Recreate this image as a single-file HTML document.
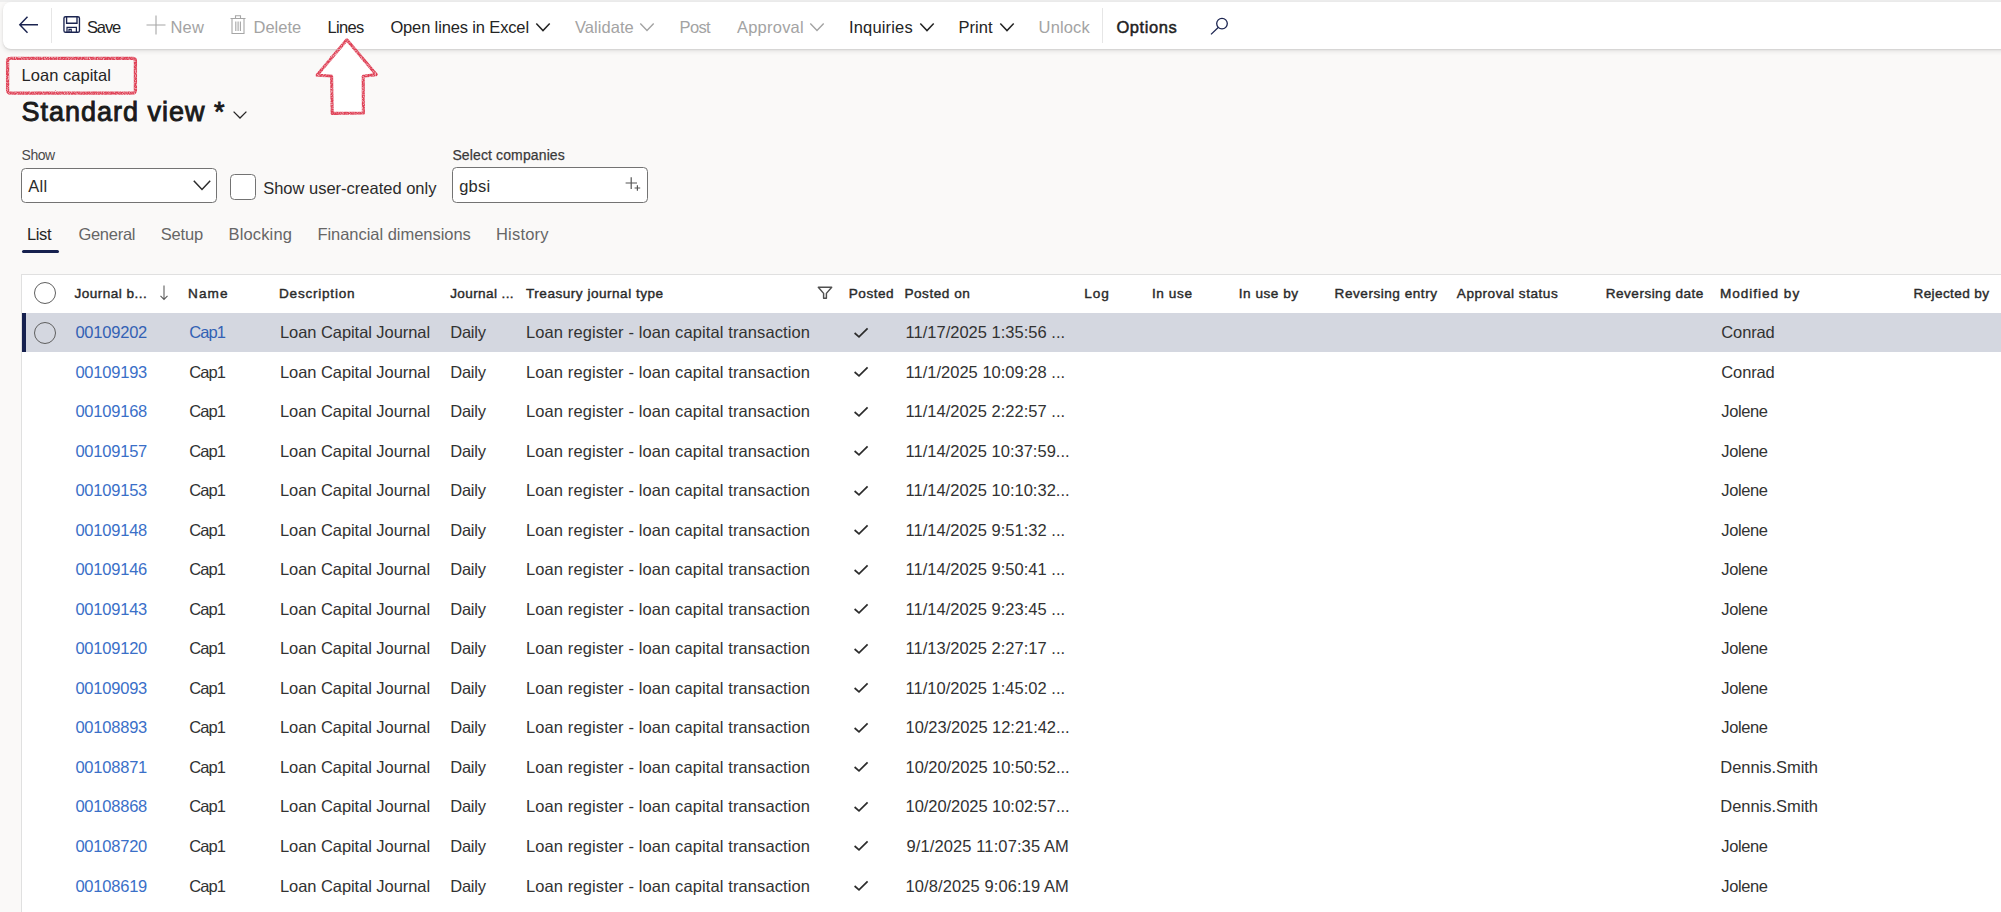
<!DOCTYPE html>
<html lang="en"><head><meta charset="utf-8"><title>Loan capital</title>
<style>
html,body{margin:0;padding:0;overflow:hidden;}
body{width:2001px;height:912px;overflow:hidden;background:#faf9f8;position:relative;font-family:"Liberation Sans",sans-serif;}
.t{position:absolute;white-space:nowrap;}
.a{position:absolute;display:block;}
.topstrip{position:absolute;left:0;top:0;width:2001px;height:2px;background:#eeeeee;}
.toolbar{position:absolute;left:3px;top:2px;width:2004px;height:47px;background:#fff;border-radius:8px 0 0 8px;box-shadow:0 1px 1.5px rgba(0,0,0,.09),0 2px 5px rgba(0,0,0,.10);}
.vsep{position:absolute;width:1.4px;background:#e6e6e6;}
.box{position:absolute;background:#fff;border:1px solid #737373;border-radius:4.5px;box-sizing:border-box;}
.grid{position:absolute;left:21px;top:274px;width:1990px;height:650px;background:#fff;border:1px solid #e0e0e0;box-sizing:border-box;}
.sel{position:absolute;left:22px;top:313px;width:1980px;height:39.2px;background:#d4d7e0;}
.selbar{position:absolute;left:22px;top:313px;width:4.2px;height:39.2px;background:#16214f;}
.circ{position:absolute;width:22px;height:22px;border:1px solid #5f5f5f;border-radius:50%;box-sizing:border-box;}

</style></head>
<body>
<div class="topstrip"></div>
<div class="toolbar"></div>
<div class="vsep" style="left:51px;top:8px;height:35px"></div>
<div class="vsep" style="left:1102px;top:8px;height:35px"></div>
<!-- back arrow -->
<svg class="a" style="left:17px;top:14px" width="24" height="22" viewBox="0 0 24 22"><path d="M21 10.8 H3 M10.5 2.8 L2.8 10.8 L10.5 18.8" fill="none" stroke="#1b2450" stroke-width="1.45"/></svg>
<!-- save icon -->
<svg class="a" style="left:62px;top:15px" width="20" height="20" viewBox="0 0 20 20"><rect x="1.95" y="1.75" width="15.5" height="15.5" rx="1.6" ry="1.6" fill="none" stroke="#1b2450" stroke-width="1.35"/><path d="M4.6 2 V8.2 H15 V2" fill="none" stroke="#1b2450" stroke-width="1.35"/><path d="M5 17.2 V12.4 H14.4 V17.2 M7 17.2 V14.4 H9.2 V17.2" fill="none" stroke="#1b2450" stroke-width="1.25"/></svg>
<!-- plus -->
<svg class="a" style="left:145px;top:14px" width="22" height="22" viewBox="0 0 22 22"><path d="M11 1.5 V20.5 M1.5 11 H20.5" fill="none" stroke="#a6a6a6" stroke-width="1.1"/></svg>
<!-- trash -->
<svg class="a" style="left:229px;top:14px" width="18" height="22" viewBox="0 0 18 22"><path d="M1.5 4.5 H16.5 M6.5 4.5 V1.8 H11.5 V4.5 M3 4.5 V19.5 H15 V4.5 M6.8 7.5 V17 M9.1 7.5 V17 M11.4 7.5 V17" fill="none" stroke="#a6a6a6" stroke-width="1.1"/></svg>
<!-- chevrons toolbar -->
<svg class="a" style="left:535px;top:22px" width="16" height="11" viewBox="0 0 16 11"><path d="M1.3 1.5 L8 8.6 L14.7 1.5" fill="none" stroke="#242424" stroke-width="1.5"/></svg>
<svg class="a" style="left:639px;top:22px" width="16" height="11" viewBox="0 0 16 11"><path d="M1.3 1.5 L8 8.6 L14.7 1.5" fill="none" stroke="#a3a3a3" stroke-width="1.4"/></svg>
<svg class="a" style="left:809px;top:22px" width="16" height="11" viewBox="0 0 16 11"><path d="M1.3 1.5 L8 8.6 L14.7 1.5" fill="none" stroke="#a3a3a3" stroke-width="1.4"/></svg>
<svg class="a" style="left:918.5px;top:22px" width="16" height="11" viewBox="0 0 16 11"><path d="M1.3 1.5 L8 8.6 L14.7 1.5" fill="none" stroke="#242424" stroke-width="1.5"/></svg>
<svg class="a" style="left:999px;top:22px" width="16" height="11" viewBox="0 0 16 11"><path d="M1.3 1.5 L8 8.6 L14.7 1.5" fill="none" stroke="#242424" stroke-width="1.5"/></svg>
<!-- search -->
<svg class="a" style="left:1208.9px;top:15.6px" width="21" height="20" viewBox="0 0 21 20"><circle cx="13" cy="7.6" r="5.3" fill="none" stroke="#1b2450" stroke-width="1.3"/><path d="M9.2 11.5 L2 18.4" fill="none" stroke="#1b2450" stroke-width="1.3"/></svg>

<!-- red annotation box -->
<svg class="a" style="left:0px;top:50px" width="400" height="72" viewBox="0 50 400 72">
<defs><filter id="cr" x="-5%" y="-5%" width="110%" height="110%"><feTurbulence type="fractalNoise" baseFrequency="0.85" numOctaves="2" seed="4" result="n"/><feDisplacementMap in="SourceGraphic" in2="n" scale="1.6" xChannelSelector="R" yChannelSelector="G" result="d"/><feColorMatrix in="n" type="matrix" values="0 0 0 0 1  0 0 0 0 1  0 0 0 0 1  0 0 0 -1.7 1.7" result="m"/><feComposite in="d" in2="m" operator="in"/></filter></defs>
<rect x="7.6" y="58.3" width="127.8" height="34.8" rx="2.5" ry="2.5" fill="none" stroke="#df3f55" stroke-width="3.3" filter="url(#cr)"/>
</svg>
<!-- red arrow -->
<svg class="a" style="left:305px;top:30px" width="84" height="92" viewBox="305 30 84 92">
<path d="M346.8 39.8 L376.2 74.6 L363.2 76.3 L363.4 113 L332.2 113.4 L331.6 76 L317 75.2 Z" fill="#ffffff" stroke="none"/>
<path d="M346.8 39.8 L376.2 74.6 L363.2 76.3 L363.4 113 L332.2 113.4 L331.6 76 L317 75.2 Z" fill="none" stroke="#df3f55" stroke-width="3.1" stroke-linejoin="round" filter="url(#cr)"/>
</svg>

<!-- title chevron -->
<svg class="a" style="left:231.9px;top:109.6px" width="16" height="10" viewBox="0 0 16 10"><path d="M1.6 1.6 L8 8 L14.4 1.6" fill="none" stroke="#262626" stroke-width="1.3"/></svg>

<!-- form controls -->
<div class="box" style="left:21px;top:168px;width:196px;height:35px"></div>
<svg class="a" style="left:192px;top:179px" width="20" height="13" viewBox="0 0 20 13"><path d="M1.8 1.8 L10 10.4 L18.2 1.8" fill="none" stroke="#2b2b2b" stroke-width="1.5"/></svg>
<div class="box" style="left:230px;top:174px;width:26px;height:26px"></div>
<div class="box" style="left:452px;top:167px;width:196px;height:36px"></div>
<svg class="a" style="left:624.3px;top:175.4px" width="18" height="18" viewBox="0 0 18 18"><path d="M7.2 2.2 V14 M1.6 8 H13 M13.4 10.2 V15.8 M10.6 13 H16.2" fill="none" stroke="#555" stroke-width="1.2"/></svg>

<!-- tab underline -->
<div style="position:absolute;left:22px;top:249.6px;width:36.5px;height:3px;border-radius:1.5px;background:#16214f"></div>

<!-- grid -->
<div class="grid"></div>
<div class="sel"></div>
<div class="selbar"></div>
<div class="circ" style="left:34px;top:282px"></div>
<div class="circ" style="left:34px;top:322px"></div>
<!-- sort arrow -->
<svg class="a" style="left:158.4px;top:284px" width="12" height="17" viewBox="0 0 12 17"><path d="M6 1.4 V15.2 M2.5 11.8 L6 15.4 L9.5 11.8" fill="none" stroke="#5a5a5a" stroke-width="1.05"/></svg>
<!-- filter -->
<svg class="a" style="left:816px;top:285px" width="18" height="16" viewBox="0 0 18 16"><path d="M2.3 2.2 H15.7 L10.4 8.4 V13.2 H7.6 V8.4 Z" fill="none" stroke="#4f4f4f" stroke-width="1.45" stroke-linejoin="round"/></svg>
<svg class="a" style="left:852px;top:324.60px" width="18" height="16" viewBox="0 0 18 16"><path d="M2.6 8.0 L7.0 11.8 L15.6 3.3" fill="none" stroke="#2b2b2b" stroke-width="1.7"/></svg>
<svg class="a" style="left:852px;top:364.13px" width="18" height="16" viewBox="0 0 18 16"><path d="M2.6 8.0 L7.0 11.8 L15.6 3.3" fill="none" stroke="#2b2b2b" stroke-width="1.7"/></svg>
<svg class="a" style="left:852px;top:403.66px" width="18" height="16" viewBox="0 0 18 16"><path d="M2.6 8.0 L7.0 11.8 L15.6 3.3" fill="none" stroke="#2b2b2b" stroke-width="1.7"/></svg>
<svg class="a" style="left:852px;top:443.19px" width="18" height="16" viewBox="0 0 18 16"><path d="M2.6 8.0 L7.0 11.8 L15.6 3.3" fill="none" stroke="#2b2b2b" stroke-width="1.7"/></svg>
<svg class="a" style="left:852px;top:482.72px" width="18" height="16" viewBox="0 0 18 16"><path d="M2.6 8.0 L7.0 11.8 L15.6 3.3" fill="none" stroke="#2b2b2b" stroke-width="1.7"/></svg>
<svg class="a" style="left:852px;top:522.25px" width="18" height="16" viewBox="0 0 18 16"><path d="M2.6 8.0 L7.0 11.8 L15.6 3.3" fill="none" stroke="#2b2b2b" stroke-width="1.7"/></svg>
<svg class="a" style="left:852px;top:561.78px" width="18" height="16" viewBox="0 0 18 16"><path d="M2.6 8.0 L7.0 11.8 L15.6 3.3" fill="none" stroke="#2b2b2b" stroke-width="1.7"/></svg>
<svg class="a" style="left:852px;top:601.31px" width="18" height="16" viewBox="0 0 18 16"><path d="M2.6 8.0 L7.0 11.8 L15.6 3.3" fill="none" stroke="#2b2b2b" stroke-width="1.7"/></svg>
<svg class="a" style="left:852px;top:640.84px" width="18" height="16" viewBox="0 0 18 16"><path d="M2.6 8.0 L7.0 11.8 L15.6 3.3" fill="none" stroke="#2b2b2b" stroke-width="1.7"/></svg>
<svg class="a" style="left:852px;top:680.37px" width="18" height="16" viewBox="0 0 18 16"><path d="M2.6 8.0 L7.0 11.8 L15.6 3.3" fill="none" stroke="#2b2b2b" stroke-width="1.7"/></svg>
<svg class="a" style="left:852px;top:719.90px" width="18" height="16" viewBox="0 0 18 16"><path d="M2.6 8.0 L7.0 11.8 L15.6 3.3" fill="none" stroke="#2b2b2b" stroke-width="1.7"/></svg>
<svg class="a" style="left:852px;top:759.43px" width="18" height="16" viewBox="0 0 18 16"><path d="M2.6 8.0 L7.0 11.8 L15.6 3.3" fill="none" stroke="#2b2b2b" stroke-width="1.7"/></svg>
<svg class="a" style="left:852px;top:798.96px" width="18" height="16" viewBox="0 0 18 16"><path d="M2.6 8.0 L7.0 11.8 L15.6 3.3" fill="none" stroke="#2b2b2b" stroke-width="1.7"/></svg>
<svg class="a" style="left:852px;top:838.49px" width="18" height="16" viewBox="0 0 18 16"><path d="M2.6 8.0 L7.0 11.8 L15.6 3.3" fill="none" stroke="#2b2b2b" stroke-width="1.7"/></svg>
<svg class="a" style="left:852px;top:878.02px" width="18" height="16" viewBox="0 0 18 16"><path d="M2.6 8.0 L7.0 11.8 L15.6 3.3" fill="none" stroke="#2b2b2b" stroke-width="1.7"/></svg>

<nav class="actionpane">
<div class="t" style="left:87.00px;top:18px;line-height:18px;height:18px;font-size:16.5px;letter-spacing:-1.144px;color:#242424;">Save</div>
<div class="t" style="left:170.50px;top:18px;line-height:18px;height:18px;font-size:16.5px;letter-spacing:0.204px;color:#a3a3a3;">New</div>
<div class="t" style="left:253.50px;top:18px;line-height:18px;height:18px;font-size:16.5px;letter-spacing:-0.004px;color:#a3a3a3;">Delete</div>
<div class="t" style="left:327.50px;top:18px;line-height:18px;height:18px;font-size:16.5px;letter-spacing:-0.674px;color:#242424;">Lines</div>
<div class="t" style="left:390.40px;top:18px;line-height:18px;height:18px;font-size:16.5px;letter-spacing:-0.143px;color:#242424;">Open lines in Excel</div>
<div class="t" style="left:575.00px;top:18px;line-height:18px;height:18px;font-size:16.5px;letter-spacing:0.053px;color:#a3a3a3;">Validate</div>
<div class="t" style="left:679.60px;top:18px;line-height:18px;height:18px;font-size:16.5px;letter-spacing:-0.677px;color:#a3a3a3;">Post</div>
<div class="t" style="left:737.00px;top:18px;line-height:18px;height:18px;font-size:16.5px;letter-spacing:0.221px;color:#a3a3a3;">Approval</div>
<div class="t" style="left:849.00px;top:18px;line-height:18px;height:18px;font-size:16.5px;letter-spacing:0.160px;color:#242424;">Inquiries</div>
<div class="t" style="left:958.60px;top:18px;line-height:18px;height:18px;font-size:16.5px;letter-spacing:0.014px;color:#242424;">Print</div>
<div class="t" style="left:1038.60px;top:18px;line-height:18px;height:18px;font-size:16.5px;letter-spacing:0.123px;color:#a3a3a3;">Unlock</div>
<div class="t" style="left:1116.40px;top:18px;line-height:18px;height:18px;font-size:16.5px;letter-spacing:0.564px;color:#1f1f1f;-webkit-text-stroke:0.5px #1f1f1f;">Options</div>
</nav>
<header class="pagehead">
<div class="t" style="left:21.50px;top:66px;line-height:18px;height:18px;font-size:16.5px;letter-spacing:0.035px;color:#252525;">Loan capital</div>
<div class="t" style="left:21.50px;top:97px;line-height:30px;height:30px;font-size:27px;letter-spacing:0.993px;color:#1a1a1a;-webkit-text-stroke:0.9px #1a1a1a;">Standard view *</div>
</header>
<section class="filters">
<div class="t" style="left:21.60px;top:147px;line-height:16px;height:16px;font-size:14px;letter-spacing:-0.503px;color:#4a4a4a;">Show</div>
<div class="t" style="left:28.20px;top:177px;line-height:18px;height:18px;font-size:16.5px;letter-spacing:0.314px;color:#2b2b2b;">All</div>
<div class="t" style="left:263.20px;top:179px;line-height:18px;height:18px;font-size:16.5px;letter-spacing:-0.004px;color:#2b2b2b;">Show user-created only</div>
<div class="t" style="left:452.40px;top:147px;line-height:16px;height:16px;font-size:14px;letter-spacing:0.126px;color:#3a3a3a;-webkit-text-stroke:0.25px #3a3a3a;">Select companies</div>
<div class="t" style="left:459.20px;top:177px;line-height:18px;height:18px;font-size:16.5px;letter-spacing:0.199px;color:#2b2b2b;">gbsi</div>
</section>
<nav class="tabs">
<div class="t" style="left:27.00px;top:225px;line-height:18px;height:18px;font-size:16.5px;letter-spacing:-0.364px;color:#252525;">List</div>
<div class="t" style="left:78.40px;top:225px;line-height:18px;height:18px;font-size:16.5px;letter-spacing:-0.272px;color:#666666;">General</div>
<div class="t" style="left:160.70px;top:225px;line-height:18px;height:18px;font-size:16.5px;letter-spacing:-0.136px;color:#666666;">Setup</div>
<div class="t" style="left:228.60px;top:225px;line-height:18px;height:18px;font-size:16.5px;letter-spacing:0.130px;color:#666666;">Blocking</div>
<div class="t" style="left:317.40px;top:225px;line-height:18px;height:18px;font-size:16.5px;letter-spacing:-0.033px;color:#666666;">Financial dimensions</div>
<div class="t" style="left:496.00px;top:225px;line-height:18px;height:18px;font-size:16.5px;letter-spacing:0.186px;color:#666666;">History</div>
</nav>
<div class="gridhead">
<div class="t" style="left:74.40px;top:286px;line-height:15px;height:15px;font-size:13.6px;letter-spacing:0.457px;color:#2a2a2a;-webkit-text-stroke:0.4px #2a2a2a;">Journal b...</div>
<div class="t" style="left:188.00px;top:286px;line-height:15px;height:15px;font-size:13.6px;letter-spacing:1.100px;color:#2a2a2a;-webkit-text-stroke:0.4px #2a2a2a;">Name</div>
<div class="t" style="left:279.00px;top:286px;line-height:15px;height:15px;font-size:13.6px;letter-spacing:0.756px;color:#2a2a2a;-webkit-text-stroke:0.4px #2a2a2a;">Description</div>
<div class="t" style="left:450.20px;top:286px;line-height:15px;height:15px;font-size:13.6px;letter-spacing:0.369px;color:#2a2a2a;-webkit-text-stroke:0.4px #2a2a2a;">Journal ...</div>
<div class="t" style="left:526.00px;top:286px;line-height:15px;height:15px;font-size:13.6px;letter-spacing:0.499px;color:#2a2a2a;-webkit-text-stroke:0.4px #2a2a2a;">Treasury journal type</div>
<div class="t" style="left:848.80px;top:286px;line-height:15px;height:15px;font-size:13.6px;letter-spacing:0.488px;color:#2a2a2a;-webkit-text-stroke:0.4px #2a2a2a;">Posted</div>
<div class="t" style="left:904.40px;top:286px;line-height:15px;height:15px;font-size:13.6px;letter-spacing:0.530px;color:#2a2a2a;-webkit-text-stroke:0.4px #2a2a2a;">Posted on</div>
<div class="t" style="left:1084.20px;top:286px;line-height:15px;height:15px;font-size:13.6px;letter-spacing:0.940px;color:#2a2a2a;-webkit-text-stroke:0.4px #2a2a2a;">Log</div>
<div class="t" style="left:1152.00px;top:286px;line-height:15px;height:15px;font-size:13.6px;letter-spacing:0.586px;color:#2a2a2a;-webkit-text-stroke:0.4px #2a2a2a;">In use</div>
<div class="t" style="left:1238.80px;top:286px;line-height:15px;height:15px;font-size:13.6px;letter-spacing:0.504px;color:#2a2a2a;-webkit-text-stroke:0.4px #2a2a2a;">In use by</div>
<div class="t" style="left:1334.60px;top:286px;line-height:15px;height:15px;font-size:13.6px;letter-spacing:0.514px;color:#2a2a2a;-webkit-text-stroke:0.4px #2a2a2a;">Reversing entry</div>
<div class="t" style="left:1456.80px;top:286px;line-height:15px;height:15px;font-size:13.6px;letter-spacing:0.514px;color:#2a2a2a;-webkit-text-stroke:0.4px #2a2a2a;">Approval status</div>
<div class="t" style="left:1605.80px;top:286px;line-height:15px;height:15px;font-size:13.6px;letter-spacing:0.464px;color:#2a2a2a;-webkit-text-stroke:0.4px #2a2a2a;">Reversing date</div>
<div class="t" style="left:1720.00px;top:286px;line-height:15px;height:15px;font-size:13.6px;letter-spacing:0.968px;color:#2a2a2a;-webkit-text-stroke:0.4px #2a2a2a;">Modified by</div>
<div class="t" style="left:1913.50px;top:286px;line-height:15px;height:15px;font-size:13.6px;letter-spacing:0.371px;color:#2a2a2a;-webkit-text-stroke:0.4px #2a2a2a;">Rejected by</div>
</div>
<div class="row">
<div class="t" style="left:75.40px;top:323px;line-height:18px;height:18px;font-size:16.5px;letter-spacing:-0.219px;color:#3361b4;">00109202</div>
<div class="t" style="left:189.30px;top:323px;line-height:18px;height:18px;font-size:16.5px;letter-spacing:-0.956px;color:#3361b4;">Cap1</div>
<div class="t" style="left:280.00px;top:323px;line-height:18px;height:18px;font-size:16.5px;letter-spacing:-0.068px;color:#323232;">Loan Capital Journal</div>
<div class="t" style="left:450.20px;top:323px;line-height:18px;height:18px;font-size:16.5px;letter-spacing:-0.206px;color:#323232;">Daily</div>
<div class="t" style="left:526.00px;top:323px;line-height:18px;height:18px;font-size:16.5px;letter-spacing:0.109px;color:#323232;">Loan register - loan capital transaction</div>
<div class="t" style="left:905.50px;top:323px;line-height:18px;height:18px;font-size:16.5px;letter-spacing:0.012px;color:#323232;">11/17/2025 1:35:56 ...</div>
<div class="t" style="left:1721.30px;top:323px;line-height:18px;height:18px;font-size:16.5px;letter-spacing:-0.128px;color:#323232;">Conrad</div>
</div>
<div class="row">
<div class="t" style="left:75.40px;top:363px;line-height:18px;height:18px;font-size:16.5px;letter-spacing:-0.219px;color:#3a6fc8;">00109193</div>
<div class="t" style="left:189.30px;top:363px;line-height:18px;height:18px;font-size:16.5px;letter-spacing:-0.956px;color:#323232;">Cap1</div>
<div class="t" style="left:280.00px;top:363px;line-height:18px;height:18px;font-size:16.5px;letter-spacing:-0.068px;color:#323232;">Loan Capital Journal</div>
<div class="t" style="left:450.20px;top:363px;line-height:18px;height:18px;font-size:16.5px;letter-spacing:-0.206px;color:#323232;">Daily</div>
<div class="t" style="left:526.00px;top:363px;line-height:18px;height:18px;font-size:16.5px;letter-spacing:0.109px;color:#323232;">Loan register - loan capital transaction</div>
<div class="t" style="left:905.50px;top:363px;line-height:18px;height:18px;font-size:16.5px;letter-spacing:0.012px;color:#323232;">11/1/2025 10:09:28 ...</div>
<div class="t" style="left:1721.30px;top:363px;line-height:18px;height:18px;font-size:16.5px;letter-spacing:-0.128px;color:#323232;">Conrad</div>
</div>
<div class="row">
<div class="t" style="left:75.40px;top:402px;line-height:18px;height:18px;font-size:16.5px;letter-spacing:-0.219px;color:#3a6fc8;">00109168</div>
<div class="t" style="left:189.30px;top:402px;line-height:18px;height:18px;font-size:16.5px;letter-spacing:-0.956px;color:#323232;">Cap1</div>
<div class="t" style="left:280.00px;top:402px;line-height:18px;height:18px;font-size:16.5px;letter-spacing:-0.068px;color:#323232;">Loan Capital Journal</div>
<div class="t" style="left:450.20px;top:402px;line-height:18px;height:18px;font-size:16.5px;letter-spacing:-0.206px;color:#323232;">Daily</div>
<div class="t" style="left:526.00px;top:402px;line-height:18px;height:18px;font-size:16.5px;letter-spacing:0.109px;color:#323232;">Loan register - loan capital transaction</div>
<div class="t" style="left:905.50px;top:402px;line-height:18px;height:18px;font-size:16.5px;letter-spacing:0.012px;color:#323232;">11/14/2025 2:22:57 ...</div>
<div class="t" style="left:1721.30px;top:402px;line-height:18px;height:18px;font-size:16.5px;letter-spacing:-0.389px;color:#323232;">Jolene</div>
</div>
<div class="row">
<div class="t" style="left:75.40px;top:442px;line-height:18px;height:18px;font-size:16.5px;letter-spacing:-0.219px;color:#3a6fc8;">00109157</div>
<div class="t" style="left:189.30px;top:442px;line-height:18px;height:18px;font-size:16.5px;letter-spacing:-0.956px;color:#323232;">Cap1</div>
<div class="t" style="left:280.00px;top:442px;line-height:18px;height:18px;font-size:16.5px;letter-spacing:-0.068px;color:#323232;">Loan Capital Journal</div>
<div class="t" style="left:450.20px;top:442px;line-height:18px;height:18px;font-size:16.5px;letter-spacing:-0.206px;color:#323232;">Daily</div>
<div class="t" style="left:526.00px;top:442px;line-height:18px;height:18px;font-size:16.5px;letter-spacing:0.109px;color:#323232;">Loan register - loan capital transaction</div>
<div class="t" style="left:905.50px;top:442px;line-height:18px;height:18px;font-size:16.5px;letter-spacing:0.008px;color:#323232;">11/14/2025 10:37:59...</div>
<div class="t" style="left:1721.30px;top:442px;line-height:18px;height:18px;font-size:16.5px;letter-spacing:-0.389px;color:#323232;">Jolene</div>
</div>
<div class="row">
<div class="t" style="left:75.40px;top:481px;line-height:18px;height:18px;font-size:16.5px;letter-spacing:-0.219px;color:#3a6fc8;">00109153</div>
<div class="t" style="left:189.30px;top:481px;line-height:18px;height:18px;font-size:16.5px;letter-spacing:-0.956px;color:#323232;">Cap1</div>
<div class="t" style="left:280.00px;top:481px;line-height:18px;height:18px;font-size:16.5px;letter-spacing:-0.068px;color:#323232;">Loan Capital Journal</div>
<div class="t" style="left:450.20px;top:481px;line-height:18px;height:18px;font-size:16.5px;letter-spacing:-0.206px;color:#323232;">Daily</div>
<div class="t" style="left:526.00px;top:481px;line-height:18px;height:18px;font-size:16.5px;letter-spacing:0.109px;color:#323232;">Loan register - loan capital transaction</div>
<div class="t" style="left:905.50px;top:481px;line-height:18px;height:18px;font-size:16.5px;letter-spacing:0.008px;color:#323232;">11/14/2025 10:10:32...</div>
<div class="t" style="left:1721.30px;top:481px;line-height:18px;height:18px;font-size:16.5px;letter-spacing:-0.389px;color:#323232;">Jolene</div>
</div>
<div class="row">
<div class="t" style="left:75.40px;top:521px;line-height:18px;height:18px;font-size:16.5px;letter-spacing:-0.219px;color:#3a6fc8;">00109148</div>
<div class="t" style="left:189.30px;top:521px;line-height:18px;height:18px;font-size:16.5px;letter-spacing:-0.956px;color:#323232;">Cap1</div>
<div class="t" style="left:280.00px;top:521px;line-height:18px;height:18px;font-size:16.5px;letter-spacing:-0.068px;color:#323232;">Loan Capital Journal</div>
<div class="t" style="left:450.20px;top:521px;line-height:18px;height:18px;font-size:16.5px;letter-spacing:-0.206px;color:#323232;">Daily</div>
<div class="t" style="left:526.00px;top:521px;line-height:18px;height:18px;font-size:16.5px;letter-spacing:0.109px;color:#323232;">Loan register - loan capital transaction</div>
<div class="t" style="left:905.50px;top:521px;line-height:18px;height:18px;font-size:16.5px;letter-spacing:0.012px;color:#323232;">11/14/2025 9:51:32 ...</div>
<div class="t" style="left:1721.30px;top:521px;line-height:18px;height:18px;font-size:16.5px;letter-spacing:-0.389px;color:#323232;">Jolene</div>
</div>
<div class="row">
<div class="t" style="left:75.40px;top:560px;line-height:18px;height:18px;font-size:16.5px;letter-spacing:-0.219px;color:#3a6fc8;">00109146</div>
<div class="t" style="left:189.30px;top:560px;line-height:18px;height:18px;font-size:16.5px;letter-spacing:-0.956px;color:#323232;">Cap1</div>
<div class="t" style="left:280.00px;top:560px;line-height:18px;height:18px;font-size:16.5px;letter-spacing:-0.068px;color:#323232;">Loan Capital Journal</div>
<div class="t" style="left:450.20px;top:560px;line-height:18px;height:18px;font-size:16.5px;letter-spacing:-0.206px;color:#323232;">Daily</div>
<div class="t" style="left:526.00px;top:560px;line-height:18px;height:18px;font-size:16.5px;letter-spacing:0.109px;color:#323232;">Loan register - loan capital transaction</div>
<div class="t" style="left:905.50px;top:560px;line-height:18px;height:18px;font-size:16.5px;letter-spacing:0.012px;color:#323232;">11/14/2025 9:50:41 ...</div>
<div class="t" style="left:1721.30px;top:560px;line-height:18px;height:18px;font-size:16.5px;letter-spacing:-0.389px;color:#323232;">Jolene</div>
</div>
<div class="row">
<div class="t" style="left:75.40px;top:600px;line-height:18px;height:18px;font-size:16.5px;letter-spacing:-0.219px;color:#3a6fc8;">00109143</div>
<div class="t" style="left:189.30px;top:600px;line-height:18px;height:18px;font-size:16.5px;letter-spacing:-0.956px;color:#323232;">Cap1</div>
<div class="t" style="left:280.00px;top:600px;line-height:18px;height:18px;font-size:16.5px;letter-spacing:-0.068px;color:#323232;">Loan Capital Journal</div>
<div class="t" style="left:450.20px;top:600px;line-height:18px;height:18px;font-size:16.5px;letter-spacing:-0.206px;color:#323232;">Daily</div>
<div class="t" style="left:526.00px;top:600px;line-height:18px;height:18px;font-size:16.5px;letter-spacing:0.109px;color:#323232;">Loan register - loan capital transaction</div>
<div class="t" style="left:905.50px;top:600px;line-height:18px;height:18px;font-size:16.5px;letter-spacing:0.012px;color:#323232;">11/14/2025 9:23:45 ...</div>
<div class="t" style="left:1721.30px;top:600px;line-height:18px;height:18px;font-size:16.5px;letter-spacing:-0.389px;color:#323232;">Jolene</div>
</div>
<div class="row">
<div class="t" style="left:75.40px;top:639px;line-height:18px;height:18px;font-size:16.5px;letter-spacing:-0.219px;color:#3a6fc8;">00109120</div>
<div class="t" style="left:189.30px;top:639px;line-height:18px;height:18px;font-size:16.5px;letter-spacing:-0.956px;color:#323232;">Cap1</div>
<div class="t" style="left:280.00px;top:639px;line-height:18px;height:18px;font-size:16.5px;letter-spacing:-0.068px;color:#323232;">Loan Capital Journal</div>
<div class="t" style="left:450.20px;top:639px;line-height:18px;height:18px;font-size:16.5px;letter-spacing:-0.206px;color:#323232;">Daily</div>
<div class="t" style="left:526.00px;top:639px;line-height:18px;height:18px;font-size:16.5px;letter-spacing:0.109px;color:#323232;">Loan register - loan capital transaction</div>
<div class="t" style="left:905.50px;top:639px;line-height:18px;height:18px;font-size:16.5px;letter-spacing:0.012px;color:#323232;">11/13/2025 2:27:17 ...</div>
<div class="t" style="left:1721.30px;top:639px;line-height:18px;height:18px;font-size:16.5px;letter-spacing:-0.389px;color:#323232;">Jolene</div>
</div>
<div class="row">
<div class="t" style="left:75.40px;top:679px;line-height:18px;height:18px;font-size:16.5px;letter-spacing:-0.219px;color:#3a6fc8;">00109093</div>
<div class="t" style="left:189.30px;top:679px;line-height:18px;height:18px;font-size:16.5px;letter-spacing:-0.956px;color:#323232;">Cap1</div>
<div class="t" style="left:280.00px;top:679px;line-height:18px;height:18px;font-size:16.5px;letter-spacing:-0.068px;color:#323232;">Loan Capital Journal</div>
<div class="t" style="left:450.20px;top:679px;line-height:18px;height:18px;font-size:16.5px;letter-spacing:-0.206px;color:#323232;">Daily</div>
<div class="t" style="left:526.00px;top:679px;line-height:18px;height:18px;font-size:16.5px;letter-spacing:0.109px;color:#323232;">Loan register - loan capital transaction</div>
<div class="t" style="left:905.50px;top:679px;line-height:18px;height:18px;font-size:16.5px;letter-spacing:0.012px;color:#323232;">11/10/2025 1:45:02 ...</div>
<div class="t" style="left:1721.30px;top:679px;line-height:18px;height:18px;font-size:16.5px;letter-spacing:-0.389px;color:#323232;">Jolene</div>
</div>
<div class="row">
<div class="t" style="left:75.40px;top:718px;line-height:18px;height:18px;font-size:16.5px;letter-spacing:-0.219px;color:#3a6fc8;">00108893</div>
<div class="t" style="left:189.30px;top:718px;line-height:18px;height:18px;font-size:16.5px;letter-spacing:-0.956px;color:#323232;">Cap1</div>
<div class="t" style="left:280.00px;top:718px;line-height:18px;height:18px;font-size:16.5px;letter-spacing:-0.068px;color:#323232;">Loan Capital Journal</div>
<div class="t" style="left:450.20px;top:718px;line-height:18px;height:18px;font-size:16.5px;letter-spacing:-0.206px;color:#323232;">Daily</div>
<div class="t" style="left:526.00px;top:718px;line-height:18px;height:18px;font-size:16.5px;letter-spacing:0.109px;color:#323232;">Loan register - loan capital transaction</div>
<div class="t" style="left:905.50px;top:718px;line-height:18px;height:18px;font-size:16.5px;letter-spacing:-0.051px;color:#323232;">10/23/2025 12:21:42...</div>
<div class="t" style="left:1721.30px;top:718px;line-height:18px;height:18px;font-size:16.5px;letter-spacing:-0.389px;color:#323232;">Jolene</div>
</div>
<div class="row">
<div class="t" style="left:75.40px;top:758px;line-height:18px;height:18px;font-size:16.5px;letter-spacing:-0.219px;color:#3a6fc8;">00108871</div>
<div class="t" style="left:189.30px;top:758px;line-height:18px;height:18px;font-size:16.5px;letter-spacing:-0.956px;color:#323232;">Cap1</div>
<div class="t" style="left:280.00px;top:758px;line-height:18px;height:18px;font-size:16.5px;letter-spacing:-0.068px;color:#323232;">Loan Capital Journal</div>
<div class="t" style="left:450.20px;top:758px;line-height:18px;height:18px;font-size:16.5px;letter-spacing:-0.206px;color:#323232;">Daily</div>
<div class="t" style="left:526.00px;top:758px;line-height:18px;height:18px;font-size:16.5px;letter-spacing:0.109px;color:#323232;">Loan register - loan capital transaction</div>
<div class="t" style="left:905.50px;top:758px;line-height:18px;height:18px;font-size:16.5px;letter-spacing:-0.051px;color:#323232;">10/20/2025 10:50:52...</div>
<div class="t" style="left:1720.30px;top:758px;line-height:18px;height:18px;font-size:16.5px;letter-spacing:-0.040px;color:#323232;">Dennis.Smith</div>
</div>
<div class="row">
<div class="t" style="left:75.40px;top:797px;line-height:18px;height:18px;font-size:16.5px;letter-spacing:-0.219px;color:#3a6fc8;">00108868</div>
<div class="t" style="left:189.30px;top:797px;line-height:18px;height:18px;font-size:16.5px;letter-spacing:-0.956px;color:#323232;">Cap1</div>
<div class="t" style="left:280.00px;top:797px;line-height:18px;height:18px;font-size:16.5px;letter-spacing:-0.068px;color:#323232;">Loan Capital Journal</div>
<div class="t" style="left:450.20px;top:797px;line-height:18px;height:18px;font-size:16.5px;letter-spacing:-0.206px;color:#323232;">Daily</div>
<div class="t" style="left:526.00px;top:797px;line-height:18px;height:18px;font-size:16.5px;letter-spacing:0.109px;color:#323232;">Loan register - loan capital transaction</div>
<div class="t" style="left:905.50px;top:797px;line-height:18px;height:18px;font-size:16.5px;letter-spacing:-0.051px;color:#323232;">10/20/2025 10:02:57...</div>
<div class="t" style="left:1720.30px;top:797px;line-height:18px;height:18px;font-size:16.5px;letter-spacing:-0.040px;color:#323232;">Dennis.Smith</div>
</div>
<div class="row">
<div class="t" style="left:75.40px;top:837px;line-height:18px;height:18px;font-size:16.5px;letter-spacing:-0.219px;color:#3a6fc8;">00108720</div>
<div class="t" style="left:189.30px;top:837px;line-height:18px;height:18px;font-size:16.5px;letter-spacing:-0.956px;color:#323232;">Cap1</div>
<div class="t" style="left:280.00px;top:837px;line-height:18px;height:18px;font-size:16.5px;letter-spacing:-0.068px;color:#323232;">Loan Capital Journal</div>
<div class="t" style="left:450.20px;top:837px;line-height:18px;height:18px;font-size:16.5px;letter-spacing:-0.206px;color:#323232;">Daily</div>
<div class="t" style="left:526.00px;top:837px;line-height:18px;height:18px;font-size:16.5px;letter-spacing:0.109px;color:#323232;">Loan register - loan capital transaction</div>
<div class="t" style="left:906.50px;top:837px;line-height:18px;height:18px;font-size:16.5px;letter-spacing:0.110px;color:#323232;">9/1/2025 11:07:35 AM</div>
<div class="t" style="left:1721.30px;top:837px;line-height:18px;height:18px;font-size:16.5px;letter-spacing:-0.389px;color:#323232;">Jolene</div>
</div>
<div class="row">
<div class="t" style="left:75.40px;top:877px;line-height:18px;height:18px;font-size:16.5px;letter-spacing:-0.219px;color:#3a6fc8;">00108619</div>
<div class="t" style="left:189.30px;top:877px;line-height:18px;height:18px;font-size:16.5px;letter-spacing:-0.956px;color:#323232;">Cap1</div>
<div class="t" style="left:280.00px;top:877px;line-height:18px;height:18px;font-size:16.5px;letter-spacing:-0.068px;color:#323232;">Loan Capital Journal</div>
<div class="t" style="left:450.20px;top:877px;line-height:18px;height:18px;font-size:16.5px;letter-spacing:-0.206px;color:#323232;">Daily</div>
<div class="t" style="left:526.00px;top:877px;line-height:18px;height:18px;font-size:16.5px;letter-spacing:0.109px;color:#323232;">Loan register - loan capital transaction</div>
<div class="t" style="left:905.50px;top:877px;line-height:18px;height:18px;font-size:16.5px;letter-spacing:0.098px;color:#323232;">10/8/2025 9:06:19 AM</div>
<div class="t" style="left:1721.30px;top:877px;line-height:18px;height:18px;font-size:16.5px;letter-spacing:-0.389px;color:#323232;">Jolene</div>
</div>
</body></html>
